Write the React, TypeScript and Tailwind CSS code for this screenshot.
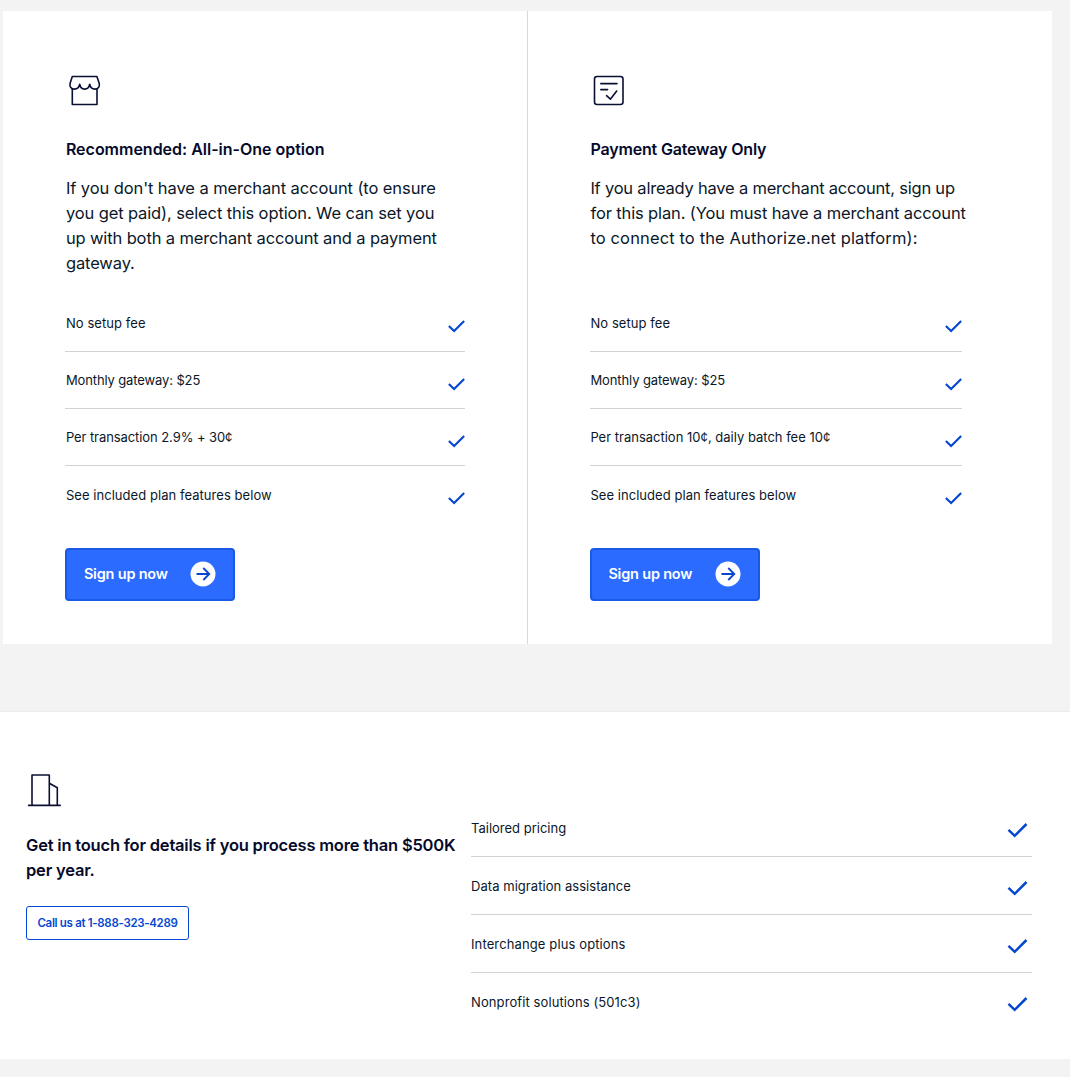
import React from 'react';

type Line = { text: string; tracking: string };

type Plan = {
  name: string;
  nameClass: string;
  icon: React.FC;
  desc: Line[];
  listClass: string;
  features: Line[];
};

const StoreIcon: React.FC = () => (
  <svg className="ml-[0.6px]" width="36" height="36" viewBox="0 0 36 36" fill="none" stroke="#0a1033" strokeWidth="1.6" strokeLinecap="round" strokeLinejoin="round">
    <path d="M6.3 14V29.5H31V14" />
    <path d="M6.3 1.5H30.9L33.2 8.2C34 11.7 32 14.1 29 14.1C26 14.1 24.2 12.3 23.7 9.2C23.2 12.3 21.2 14.1 18.7 14.1C16.2 14.1 14.2 12.3 13.7 9.2C13.2 12.3 11.3 14.1 8.3 14.1C5.3 14.1 3.3 11.7 4.1 8.2Z" />
  </svg>
);

const FormIcon: React.FC = () => (
  <svg width="36" height="36" viewBox="0 0 36 36" fill="none" stroke="#0a1033" strokeWidth="1.6" strokeLinecap="round" strokeLinejoin="round">
    <rect x="4.5" y="1.5" width="28.5" height="28" rx="2.5" />
    <path d="M10.8 8.6h16.2M10.8 14.6h6.8" />
    <path d="M16.6 20.7l3.8 3.5 6.3-8.2" />
  </svg>
);

const BuildingIcon: React.FC = () => (
  <svg width="36" height="36" viewBox="0 0 36 36" fill="none" stroke="#0a1033" strokeWidth="1.6" strokeLinecap="round" strokeLinejoin="round">
    <path d="M2.6 31.4h31.6M6 31.4V1h17.3v30.4M23.3 9.2l8 4.6v17.6" />
  </svg>
);

const plans: Plan[] = [
  {
    name: 'Recommended: All-in-One option',
    nameClass: 'tracking-[-0.01px]',
    icon: StoreIcon,
    desc: [
      { text: "If you don't have a merchant account (to ensure", tracking: 'tracking-[-0.09px]' },
      { text: 'you get paid), select this option. We can set you', tracking: 'tracking-[-0.12px]' },
      { text: 'up with both a merchant account and a payment', tracking: 'tracking-[-0.13px]' },
      { text: 'gateway.', tracking: 'tracking-[-0.12px]' },
    ],
    listClass: 'w-[400px]',
    features: [
      { text: 'No setup fee', tracking: 'tracking-[0.08px]' },
      { text: 'Monthly gateway: $25', tracking: 'tracking-[-0.12px]' },
      { text: 'Per transaction 2.9% + 30¢', tracking: 'tracking-[-0.08px]' },
      { text: 'See included plan features below', tracking: 'tracking-[0.05px]' },
    ],
  },
  {
    name: 'Payment Gateway Only',
    nameClass: 'tracking-[-0.17px]',
    icon: FormIcon,
    desc: [
      { text: 'If you already have a merchant account, sign up', tracking: 'tracking-[-0.21px]' },
      { text: 'for this plan. (You must have a merchant account', tracking: 'tracking-[-0.13px]' },
      { text: 'to connect to the Authorize.net platform):', tracking: 'tracking-[0.13px]' },
    ],
    listClass: 'w-[372px]',
    features: [
      { text: 'No setup fee', tracking: 'tracking-[0.08px]' },
      { text: 'Monthly gateway: $25', tracking: 'tracking-[-0.1px]' },
      { text: 'Per transaction 10¢, daily batch fee 10¢', tracking: 'tracking-[0px]' },
      { text: 'See included plan features below', tracking: 'tracking-[0.05px]' },
    ],
  },
];

const enterpriseFeatures: Line[] = [
  { text: 'Tailored pricing', tracking: 'tracking-[0px]' },
  { text: 'Data migration assistance', tracking: 'tracking-[0.05px]' },
  { text: 'Interchange plus options', tracking: 'tracking-[0.12px]' },
  { text: 'Nonprofit solutions (501c3)', tracking: 'tracking-[0.1px]' },
];

const CheckMark: React.FC<{ className: string }> = ({ className }) => (
  <svg className={className} viewBox="0 0 20 15" fill="none" stroke="#0547d1" strokeWidth="2.5">
    <path d="M1 6.8l6.2 6L19 1" />
  </svg>
);

const PlanCard: React.FC<{ plan: Plan }> = ({ plan }) => {
  const Icon = plan.icon;

  return (
    <div className="pt-[64px] pl-[62.4px]">
      <Icon />
      <h2 className={`mt-[25px] h-[26px] pl-[0.5px] text-[16px] leading-[26px] font-semibold whitespace-nowrap text-[#050a2b] ${plan.nameClass}`}>{plan.name}</h2>
      <p className="mt-[13.6px] h-[119.2px] pl-[0.5px] text-[16.5px] leading-[25.2px] whitespace-nowrap">
        {plan.desc.map(line => (
          <span key={line.text} className={`block ${line.tracking}`}>{line.text}</span>
        ))}
      </p>
      <ul className={`divide-y divide-[#d2d2d2] ${plan.listClass}`}>
        {plan.features.map(f => (
          <li key={f.text} className="flex h-[57.2px] items-center justify-between text-[13px]">
            <span className={`pt-px pl-[0.5px] whitespace-nowrap ${f.tracking}`}>{f.text}</span>
            <CheckMark className="mt-[8px] h-[13px] w-[17px]" />
          </li>
        ))}
      </ul>
      <a
        href="#signup"
        className="mt-[24.8px] flex h-[53px] w-[170px] items-center justify-between rounded-[4px] border-2 border-[#1a5ae6] bg-[#2b6bff] pr-[17px] pl-[16.5px] text-[14.5px] font-semibold tracking-[-0.2px] text-white"
      >
        <span className="-mt-px whitespace-nowrap">Sign up now</span>
        <svg className="-mt-[2px]" width="26" height="26" viewBox="0 0 26 26" fill="none">
          <circle cx="13" cy="13" r="12.5" fill="white" />
          <path d="M6.5 13h12.5M13.3 7l6 6-6 6" stroke="#0547d1" strokeWidth="1.8" />
        </svg>
      </a>
    </div>
  );
};

const App: React.FC = () => (
  <main className="h-[1077px] w-[1070px] overflow-hidden bg-[#f3f3f3] pt-[11px] font-[Inter,sans-serif] text-[#0b1729]">
    {/* Plans */}
    <section className="ml-[3px] grid h-[633px] w-[1049px] grid-cols-2 divide-x divide-[#d9d9d9] bg-white">
      {plans.map(plan => (
        <PlanCard key={plan.name} plan={plan} />
      ))}
    </section>

    {/* High volume merchants */}
    <section className="mt-[67px] flex h-[348px] border-t border-[#ececec] bg-white pl-[26px]">
      <div className="w-[445px] pt-[62px]">
        <BuildingIcon />
        <h2 className="mt-[23px] text-[16.5px] leading-[25px] font-semibold tracking-[-0.2px] whitespace-nowrap text-[#050a2b]">
          <span className="block">Get in touch for details if you process more than $500K</span>
          <span className="block">per year.</span>
        </h2>
        <a
          href="tel:18883234289"
          className="mt-[23px] flex h-[34px] w-[163px] items-center justify-center rounded-[3px] border border-[#0547d1] pt-[2px] text-[11.5px] font-semibold tracking-[-0.32px] whitespace-nowrap text-[#0547d1]"
        >
          Call us at 1-888-323-4289
        </a>
      </div>
      <ul className="w-[561px] divide-y divide-[#d2d2d2] pt-[87px]">
        {enterpriseFeatures.map(f => (
          <li key={f.text} className="flex h-[58px] items-center justify-between pr-[4px] text-[13px]">
            <span className={`pt-[2px] whitespace-nowrap ${f.tracking}`}>{f.text}</span>
            <CheckMark className="mt-[5px] h-[15px] w-[21px]" />
          </li>
        ))}
      </ul>
    </section>
  </main>
);

export default App;
